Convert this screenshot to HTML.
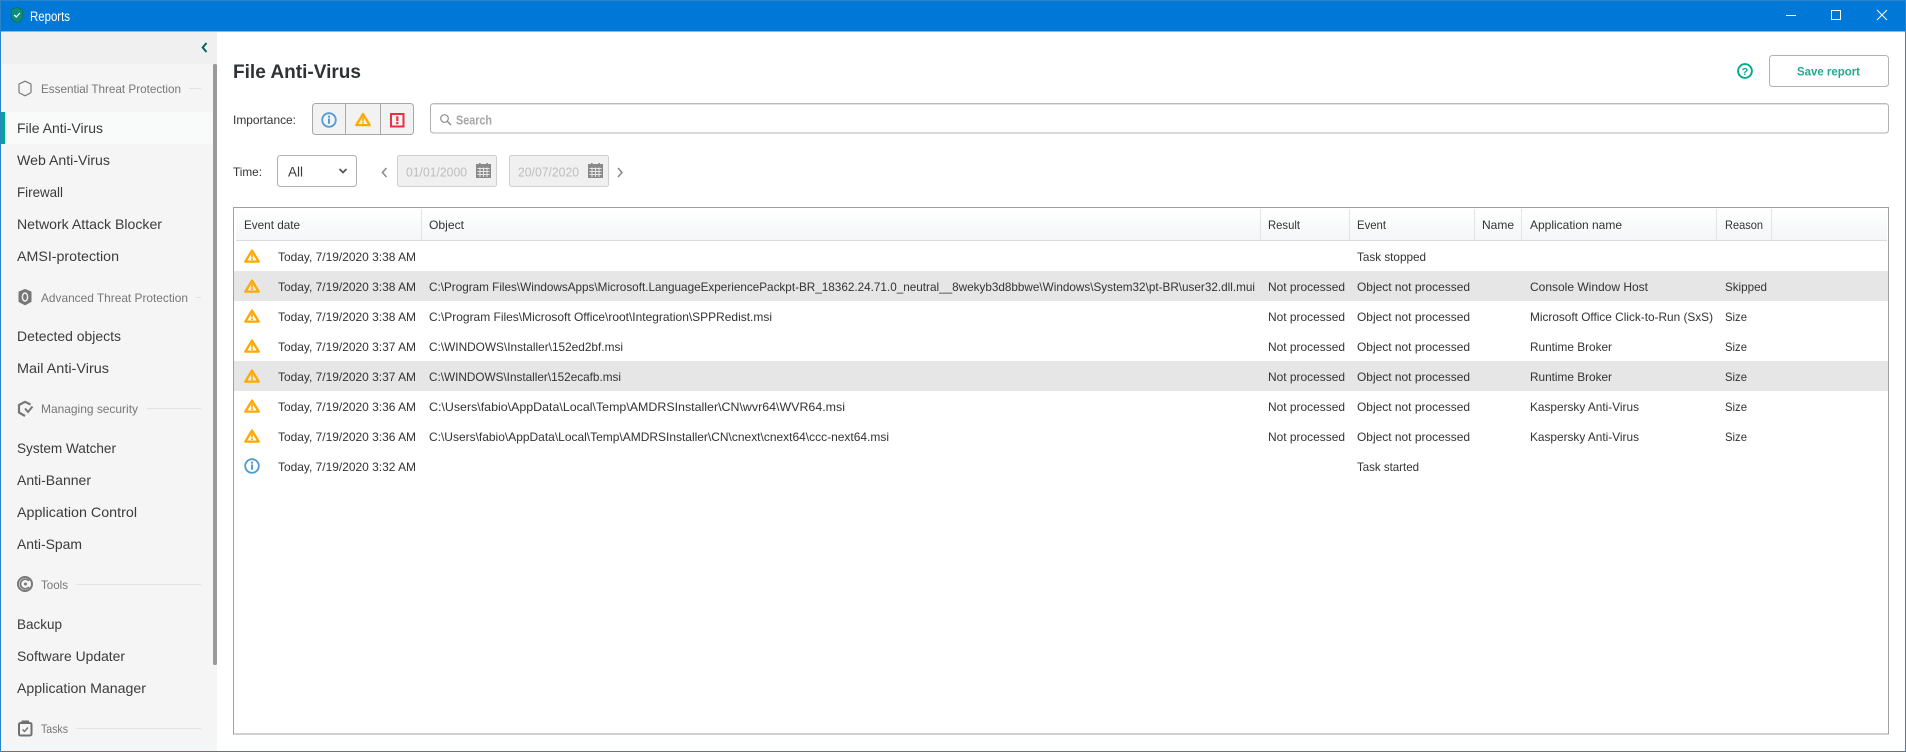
<!DOCTYPE html>
<html lang="en"><head><meta charset="utf-8"><title>Reports</title>
<style>
html,body{margin:0;padding:0;background:#fff;width:1906px;height:752px;overflow:hidden}
svg{display:block}
text{font-family:"Liberation Sans",sans-serif;white-space:pre}
.n{font-size:14px;fill:#3b3b3b}
.h{font-size:12px;fill:#777}
.t{font-size:12px;fill:#333}
.l{stroke:#e2e2e2;stroke-width:1}
</style></head><body>
<svg width="1906" height="752" viewBox="0 0 1906 752" xmlns="http://www.w3.org/2000/svg">
<defs>
<linearGradient id="hd" x1="0" y1="0" x2="0" y2="1"><stop offset="0" stop-color="#fff"/><stop offset="1" stop-color="#f4f6f7"/></linearGradient>
<g id="w"><path d="M1.3 12.6 8 1.6 14.7 12.6Z" fill="none" stroke="#ffa800" stroke-width="2.3" stroke-linejoin="round"/><rect x="7.1" y="4.8" width="1.8" height="3.8" fill="#ffa800"/><rect x="7.1" y="9.3" width="1.8" height="1.7" fill="#ffa800"/></g>
<g id="i"><circle cx="0" cy="0" r="6.8" fill="none" stroke="#4f9bd3" stroke-width="1.8"/><rect x="-1" y="-1.5" width="2" height="5.2" fill="#4f9bd3"/><rect x="-1" y="-4.3" width="2" height="1.9" fill="#4f9bd3"/></g>
<g id="c"><rect x="0" y="1" width="15" height="14" fill="#8a8a8a"/><rect x="3" y="0" width="1.6" height="3" fill="#8a8a8a"/><rect x="10.4" y="0" width="1.6" height="3" fill="#8a8a8a"/><path d="M1.5 5.5H13.5M1.5 8.5H13.5M1.5 11.5H13.5M4 4.5V14M7.5 4.5V14M11 4.5V14" stroke="#e8e8e8" stroke-width="1"/></g>
</defs>

<!-- window -->
<rect width="1906" height="752" fill="#fff"/>
<rect x="0" y="0" width="1906" height="31.5" fill="#0078d7"/>
<rect x="0.5" y="0.5" width="1905" height="751" fill="none" stroke="#2b83c9" stroke-width="1"/>
<path d="M17 7.3 22.8 9.6V16.2C22.8 19.3 20 21.4 17 22.8 14 21.4 11.2 19.3 11.2 16.2V9.6Z" fill="#0a8f78" stroke="#0b6a5b" stroke-width=".7"/>
<path d="M14.2 15 16.3 17 19.9 13" fill="none" stroke="#fff" stroke-width="1.3"/>
<text x="30" y="21" font-size="13.5" fill="#fff" textLength="40" lengthAdjust="spacingAndGlyphs">Reports</text>
<path d="M1786 15.5H1796" stroke="#fff" stroke-width="1"/>
<rect x="1831.5" y="10.5" width="9" height="9" fill="none" stroke="#fff" stroke-width="1"/>
<path d="M1877 10 1887 20M1887 10 1877 20" stroke="#fff" stroke-width="1"/>

<!-- sidebar -->
<rect x="1" y="32" width="216" height="719" fill="#f5f5f5"/>
<rect x="1" y="32" width="216" height="32" fill="#f0f0f0"/>
<path d="M206.5 43 202.7 47.5 206.5 52" fill="none" stroke="#00695a" stroke-width="2"/>
<rect x="213" y="64" width="4" height="601" rx="1.5" fill="#9a9a9a"/>
<rect x="1" y="112" width="212" height="32" fill="#f9fbfa"/>
<rect x="1" y="112" width="4" height="32" fill="#00a88e"/>

<path d="M25 81.2 30.6 83.8Q31 84 31 84.6V92Q31 92.6 30.6 92.9L25 95.8 19.4 92.9Q19 92.6 19 92V84.6Q19 84 19.4 83.8Z" fill="none" stroke="#7a7a7a" stroke-width="1.2" stroke-linejoin="round"/>
<text class="h" x="41" y="93" textLength="140" lengthAdjust="spacingAndGlyphs">Essential Threat Protection</text>
<line class="l" x1="189" y1="88.5" x2="201" y2="88.5"/>

<text class="n" x="17" y="133" textLength="86" lengthAdjust="spacingAndGlyphs">File Anti-Virus</text>
<text class="n" x="17" y="165" textLength="93" lengthAdjust="spacingAndGlyphs">Web Anti-Virus</text>
<text class="n" x="17" y="197" textLength="46" lengthAdjust="spacingAndGlyphs">Firewall</text>
<text class="n" x="17" y="229" textLength="145" lengthAdjust="spacingAndGlyphs">Network Attack Blocker</text>
<text class="n" x="17" y="261" textLength="102" lengthAdjust="spacingAndGlyphs">AMSI-protection</text>

<path d="M25 289.5 31 292V301.5L25 304.8 19 301.5V292Z" fill="#777" stroke="#777" stroke-linejoin="round"/><ellipse cx="25" cy="297" rx="2.6" ry="4" fill="none" stroke="#f5f5f5" stroke-width="1.4"/>
<text class="h" x="41" y="302" textLength="147" lengthAdjust="spacingAndGlyphs">Advanced Threat Protection</text>
<line class="l" x1="196" y1="297.5" x2="201" y2="297.5"/>
<text class="n" x="17" y="341" textLength="104" lengthAdjust="spacingAndGlyphs">Detected objects</text>
<text class="n" x="17" y="373" textLength="92" lengthAdjust="spacingAndGlyphs">Mail Anti-Virus</text>

<path d="M30.5 404.5 25 401.8 19 405V412.5L25 416" fill="none" stroke="#777" stroke-width="2.2" stroke-linejoin="round"/><path d="M25 408.5 28 412 32.5 406.5" fill="none" stroke="#777" stroke-width="2"/>
<text class="h" x="41" y="413" textLength="97" lengthAdjust="spacingAndGlyphs">Managing security</text>
<line class="l" x1="147" y1="408.5" x2="201" y2="408.5"/>
<text class="n" x="17" y="453" textLength="99" lengthAdjust="spacingAndGlyphs">System Watcher</text>
<text class="n" x="17" y="485" textLength="74" lengthAdjust="spacingAndGlyphs">Anti-Banner</text>
<text class="n" x="17" y="517" textLength="120" lengthAdjust="spacingAndGlyphs">Application Control</text>
<text class="n" x="17" y="549" textLength="65" lengthAdjust="spacingAndGlyphs">Anti-Spam</text>

<circle cx="25" cy="584" r="7" fill="none" stroke="#777" stroke-width="2"/><path d="M29 581A4.8 4.8 0 1 0 29 587" fill="none" stroke="#777" stroke-width="1.7"/><circle cx="25.5" cy="584" r="1.5" fill="#777"/>
<text class="h" x="41" y="589" textLength="27" lengthAdjust="spacingAndGlyphs">Tools</text>
<line class="l" x1="76" y1="584.5" x2="201" y2="584.5"/>
<text class="n" x="17" y="629" textLength="45" lengthAdjust="spacingAndGlyphs">Backup</text>
<text class="n" x="17" y="661" textLength="108" lengthAdjust="spacingAndGlyphs">Software Updater</text>
<text class="n" x="17" y="693" textLength="129" lengthAdjust="spacingAndGlyphs">Application Manager</text>

<rect x="19" y="723" width="12.5" height="12.5" rx="1.5" fill="none" stroke="#6f6f6f" stroke-width="2"/><rect x="21.5" y="720.5" width="7.5" height="3" fill="#6f6f6f"/><path d="M22.5 729.5 24.5 731.5 28 727.5" fill="none" stroke="#6f6f6f" stroke-width="1.4"/>
<text class="h" x="41" y="733" textLength="27" lengthAdjust="spacingAndGlyphs">Tasks</text>
<line class="l" x1="76" y1="728.5" x2="201" y2="728.5"/>

<!-- heading -->
<text x="233" y="78" font-size="19.5" font-weight="bold" fill="#2e3236" textLength="128" lengthAdjust="spacingAndGlyphs">File Anti-Virus</text>
<circle cx="1745" cy="71" r="6.9" fill="none" stroke="#00a88e" stroke-width="1.9"/>
<text x="1745" y="75" font-size="10.5" font-weight="bold" fill="#00a88e" text-anchor="middle">?</text>
<rect x="1769.5" y="55.5" width="119" height="31" rx="3" fill="#fff" stroke="#b3b3b3"/>
<text x="1797" y="75.5" font-size="12" font-weight="bold" fill="#22a98f" textLength="63" lengthAdjust="spacingAndGlyphs">Save report</text>

<!-- importance -->
<text class="t" x="233" y="124" textLength="63" lengthAdjust="spacingAndGlyphs">Importance:</text>
<rect x="312.5" y="103.5" width="101" height="31" rx="3" fill="#f2f2f2" stroke="#a8a8a8"/>
<path d="M345.5 104V134M380.5 104V134" stroke="#a8a8a8"/>
<use href="#i" x="329" y="120"/>
<use href="#w" x="355" y="112.5"/>
<rect x="391" y="114" width="12.5" height="12.5" fill="none" stroke="#ee2d44" stroke-width="2"/>
<rect x="396.2" y="116.3" width="2.2" height="4.8" fill="#ee2d44"/><rect x="396.2" y="122" width="2.2" height="2.2" fill="#ee2d44"/>

<rect x="430.5" y="103.5" width="1458" height="29.5" rx="3" fill="#fff" stroke="#b0b0b0"/>
<path d="M432 104H1887" stroke="#c4c4c4"/>
<circle cx="444.5" cy="118.5" r="3.8" fill="none" stroke="#8c8c8c" stroke-width="1.2"/><path d="M447.3 121.3 451 125" stroke="#8c8c8c" stroke-width="1.4"/>
<text x="456" y="124.5" font-size="13" font-weight="bold" fill="#a6a6a6" textLength="36" lengthAdjust="spacingAndGlyphs">Search</text>

<!-- time -->
<text class="t" x="233" y="176" textLength="29" lengthAdjust="spacingAndGlyphs">Time:</text>
<rect x="277.5" y="155.5" width="79" height="31" rx="3" fill="#fff" stroke="#b0b0b0"/>
<text x="288" y="176.5" font-size="14" fill="#3b3b3b" textLength="15" lengthAdjust="spacingAndGlyphs">All</text>
<path d="M339.5 169 343 172.5 346.5 169" fill="none" stroke="#555" stroke-width="1.7"/>
<path d="M386.5 168 382.5 172.5 386.5 177" fill="none" stroke="#8c8c8c" stroke-width="1.6"/>
<rect x="397.5" y="155.5" width="99" height="31" rx="2" fill="#f0f0f0" stroke="#cfcfcf"/>
<text x="406" y="176.5" font-size="12.5" fill="#bdbdbd" textLength="61" lengthAdjust="spacingAndGlyphs">01/01/2000</text>
<use href="#c" x="476" y="163"/>
<rect x="509.5" y="155.5" width="99" height="31" rx="2" fill="#f0f0f0" stroke="#cfcfcf"/>
<text x="518" y="176.5" font-size="12.5" fill="#bdbdbd" textLength="61" lengthAdjust="spacingAndGlyphs">20/07/2020</text>
<use href="#c" x="588" y="163"/>
<path d="M618 168 622 172.5 618 177" fill="none" stroke="#8c8c8c" stroke-width="1.6"/>

<!-- table -->
<rect x="233.5" y="207.5" width="1655" height="526.5" fill="#fff" stroke="#a0a0a0"/>
<rect x="236" y="208" width="1651" height="32" fill="url(#hd)"/>
<path d="M236 240.5H1887" stroke="#dcdcdc"/>
<path d="M421.5 209V240M1260.5 209V240M1349.5 209V240M1474.5 209V240M1521.5 209V240M1716.5 209V240M1771.5 209V240" stroke="#e4e4e4"/>
<text class="t" x="244" y="229" textLength="56" lengthAdjust="spacingAndGlyphs">Event date</text>
<text class="t" x="429" y="229" textLength="35" lengthAdjust="spacingAndGlyphs">Object</text>
<text class="t" x="1268" y="229" textLength="32" lengthAdjust="spacingAndGlyphs">Result</text>
<text class="t" x="1357" y="229" textLength="29" lengthAdjust="spacingAndGlyphs">Event</text>
<text class="t" x="1482" y="229" textLength="32" lengthAdjust="spacingAndGlyphs">Name</text>
<text class="t" x="1530" y="229" textLength="92" lengthAdjust="spacingAndGlyphs">Application name</text>
<text class="t" x="1725" y="229" textLength="38" lengthAdjust="spacingAndGlyphs">Reason</text>

<rect x="234" y="271" width="1654" height="30" fill="#e6e6e6"/>
<rect x="234" y="361" width="1654" height="30" fill="#e6e6e6"/>

<!-- row 1 -->
<use href="#w" x="244" y="249"/>
<text class="t" x="278" y="261" textLength="138" lengthAdjust="spacingAndGlyphs">Today, 7/19/2020 3:38 AM</text>
<text class="t" x="1357" y="261" textLength="69" lengthAdjust="spacingAndGlyphs">Task stopped</text>
<!-- row 2 -->
<use href="#w" x="244" y="279"/>
<text class="t" x="278" y="291" textLength="138" lengthAdjust="spacingAndGlyphs">Today, 7/19/2020 3:38 AM</text>
<text class="t" x="429" y="291" textLength="826" lengthAdjust="spacingAndGlyphs">C:\Program Files\WindowsApps\Microsoft.LanguageExperiencePackpt-BR_18362.24.71.0_neutral__8wekyb3d8bbwe\Windows\System32\pt-BR\user32.dll.mui</text>
<text class="t" x="1268" y="291" textLength="77" lengthAdjust="spacingAndGlyphs">Not processed</text>
<text class="t" x="1357" y="291" textLength="113" lengthAdjust="spacingAndGlyphs">Object not processed</text>
<text class="t" x="1530" y="291" textLength="118" lengthAdjust="spacingAndGlyphs">Console Window Host</text>
<text class="t" x="1725" y="291" textLength="42" lengthAdjust="spacingAndGlyphs">Skipped</text>
<!-- row 3 -->
<use href="#w" x="244" y="309"/>
<text class="t" x="278" y="321" textLength="138" lengthAdjust="spacingAndGlyphs">Today, 7/19/2020 3:38 AM</text>
<text class="t" x="429" y="321" textLength="343" lengthAdjust="spacingAndGlyphs">C:\Program Files\Microsoft Office\root\Integration\SPPRedist.msi</text>
<text class="t" x="1268" y="321" textLength="77" lengthAdjust="spacingAndGlyphs">Not processed</text>
<text class="t" x="1357" y="321" textLength="113" lengthAdjust="spacingAndGlyphs">Object not processed</text>
<text class="t" x="1530" y="321" textLength="183" lengthAdjust="spacingAndGlyphs">Microsoft Office Click-to-Run (SxS)</text>
<text class="t" x="1725" y="321" textLength="22" lengthAdjust="spacingAndGlyphs">Size</text>
<!-- row 4 -->
<use href="#w" x="244" y="339"/>
<text class="t" x="278" y="351" textLength="138" lengthAdjust="spacingAndGlyphs">Today, 7/19/2020 3:37 AM</text>
<text class="t" x="429" y="351" textLength="194" lengthAdjust="spacingAndGlyphs">C:\WINDOWS\Installer\152ed2bf.msi</text>
<text class="t" x="1268" y="351" textLength="77" lengthAdjust="spacingAndGlyphs">Not processed</text>
<text class="t" x="1357" y="351" textLength="113" lengthAdjust="spacingAndGlyphs">Object not processed</text>
<text class="t" x="1530" y="351" textLength="82" lengthAdjust="spacingAndGlyphs">Runtime Broker</text>
<text class="t" x="1725" y="351" textLength="22" lengthAdjust="spacingAndGlyphs">Size</text>
<!-- row 5 -->
<use href="#w" x="244" y="369"/>
<text class="t" x="278" y="381" textLength="138" lengthAdjust="spacingAndGlyphs">Today, 7/19/2020 3:37 AM</text>
<text class="t" x="429" y="381" textLength="192" lengthAdjust="spacingAndGlyphs">C:\WINDOWS\Installer\152ecafb.msi</text>
<text class="t" x="1268" y="381" textLength="77" lengthAdjust="spacingAndGlyphs">Not processed</text>
<text class="t" x="1357" y="381" textLength="113" lengthAdjust="spacingAndGlyphs">Object not processed</text>
<text class="t" x="1530" y="381" textLength="82" lengthAdjust="spacingAndGlyphs">Runtime Broker</text>
<text class="t" x="1725" y="381" textLength="22" lengthAdjust="spacingAndGlyphs">Size</text>
<!-- row 6 -->
<use href="#w" x="244" y="399"/>
<text class="t" x="278" y="411" textLength="138" lengthAdjust="spacingAndGlyphs">Today, 7/19/2020 3:36 AM</text>
<text class="t" x="429" y="411" textLength="416" lengthAdjust="spacingAndGlyphs">C:\Users\fabio\AppData\Local\Temp\AMDRSInstaller\CN\wvr64\WVR64.msi</text>
<text class="t" x="1268" y="411" textLength="77" lengthAdjust="spacingAndGlyphs">Not processed</text>
<text class="t" x="1357" y="411" textLength="113" lengthAdjust="spacingAndGlyphs">Object not processed</text>
<text class="t" x="1530" y="411" textLength="109" lengthAdjust="spacingAndGlyphs">Kaspersky Anti-Virus</text>
<text class="t" x="1725" y="411" textLength="22" lengthAdjust="spacingAndGlyphs">Size</text>
<!-- row 7 -->
<use href="#w" x="244" y="429"/>
<text class="t" x="278" y="441" textLength="138" lengthAdjust="spacingAndGlyphs">Today, 7/19/2020 3:36 AM</text>
<text class="t" x="429" y="441" textLength="460" lengthAdjust="spacingAndGlyphs">C:\Users\fabio\AppData\Local\Temp\AMDRSInstaller\CN\cnext\cnext64\ccc-next64.msi</text>
<text class="t" x="1268" y="441" textLength="77" lengthAdjust="spacingAndGlyphs">Not processed</text>
<text class="t" x="1357" y="441" textLength="113" lengthAdjust="spacingAndGlyphs">Object not processed</text>
<text class="t" x="1530" y="441" textLength="109" lengthAdjust="spacingAndGlyphs">Kaspersky Anti-Virus</text>
<text class="t" x="1725" y="441" textLength="22" lengthAdjust="spacingAndGlyphs">Size</text>
<!-- row 8 -->
<use href="#i" x="252" y="466"/>
<text class="t" x="278" y="471" textLength="138" lengthAdjust="spacingAndGlyphs">Today, 7/19/2020 3:32 AM</text>
<text class="t" x="1357" y="471" textLength="62" lengthAdjust="spacingAndGlyphs">Task started</text>
</svg>
</body></html>
